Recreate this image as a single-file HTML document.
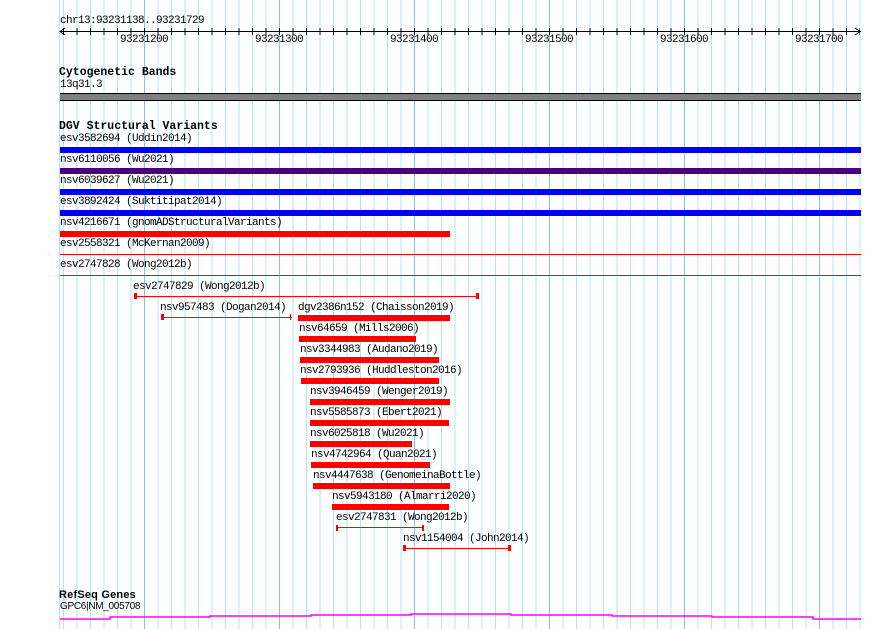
<!DOCTYPE html>
<html><head><meta charset="utf-8">
<style>
html,body{margin:0;padding:0;background:#fff;}
body{width:890px;height:629px;position:relative;overflow:hidden;font-family:"Liberation Mono",monospace;font-size:10px;color:#000;}
.grid{position:absolute;left:63px;top:0;width:798px;height:629px;
 background-image:repeating-linear-gradient(to right,#ade8f0 0 1px,transparent 1px 13.5px);
 background-position:0 0;}
.maj{position:absolute;top:0;width:1px;height:629px;background:#84c4e4;}
.t{position:absolute;white-space:pre;line-height:11px;font-size:11px;letter-spacing:-0.6px;}
.b{position:absolute;white-space:pre;line-height:12px;font-size:11.5px;font-weight:bold;}
.bar{position:absolute;height:6px;}
.red{background:#ff0000;}
.ln{position:absolute;height:1px;background:#ff0000;}
.cap{position:absolute;width:3px;height:6px;background:#ff0000;}
</style></head><body>
<div class="grid"></div>
<div style="position:absolute;left:59px;top:0;width:1px;height:629px;background:#ade8f0"></div>
<div class="maj" style="left:144px"></div>
<div class="maj" style="left:279px"></div>
<div class="maj" style="left:414px"></div>
<div class="maj" style="left:549px"></div>
<div class="maj" style="left:684px"></div>
<div class="maj" style="left:819px"></div>

<!-- ruler -->
<div class="t" style="left:60px;top:16px">chr13:93231138..93231729</div>
<div style="position:absolute;left:60px;top:31px;width:801px;height:1px;background:#000"></div>
<div style="position:absolute;left:63px;top:28px;width:797px;height:7px;background-image:repeating-linear-gradient(to right,#000 0 1px,transparent 1px 13.5px)"></div>
<svg style="position:absolute;left:59px;top:27px" width="8" height="9"><path d="M6 1 L1 4.5 L6 8" fill="none" stroke="#000" stroke-width="1"/></svg>
<svg style="position:absolute;left:854px;top:27px" width="8" height="9"><path d="M1 1 L6 4.5 L1 8" fill="none" stroke="#000" stroke-width="1"/></svg>
<div class="t" style="left:120px;top:35px">93231200</div>
<div class="t" style="left:255px;top:35px">93231300</div>
<div class="t" style="left:390px;top:35px">93231400</div>
<div class="t" style="left:525px;top:35px">93231500</div>
<div class="t" style="left:660px;top:35px">93231600</div>
<div class="t" style="left:795px;top:35px">93231700</div>

<!-- cytobands -->
<div class="b" style="left:59px;top:67px">Cytogenetic Bands</div>
<div class="t" style="left:60px;top:80px">13q31.3</div>
<div style="position:absolute;left:60px;top:93px;width:801px;height:6px;background:#808080;border-top:1px solid #000;border-bottom:1px solid #000"></div>

<!-- DGV -->
<div class="b" style="left:59px;top:121px">DGV Structural Variants</div>
<div class="t" style="left:60px;top:134px">esv3582694 (Uddin2014)</div>
<div class="bar" style="left:60px;top:147px;width:801px;background:#0000ff"></div>
<div class="t" style="left:60px;top:155px">nsv6110056 (Wu2021)</div>
<div class="bar" style="left:60px;top:168px;width:801px;background:#4b0082"></div>
<div class="t" style="left:60px;top:176px">nsv6039627 (Wu2021)</div>
<div class="bar" style="left:60px;top:189px;width:801px;background:#0000ff"></div>
<div class="t" style="left:60px;top:197px">esv3892424 (Suktitipat2014)</div>
<div class="bar" style="left:60px;top:210px;width:801px;background:#0000ff"></div>
<div class="t" style="left:60px;top:218px">nsv4216671 (gnomADStructuralVariants)</div>
<div class="bar red" style="left:60px;top:231px;width:390px"></div>
<div class="t" style="left:60px;top:239px">esv2558321 (McKernan2009)</div>
<div class="ln" style="left:60px;top:254px;width:801px"></div>
<div class="t" style="left:60px;top:260px">esv2747828 (Wong2012b)</div>
<div class="ln" style="left:60px;top:275px;width:801px"></div>

<div class="t" style="left:133px;top:282px">esv2747829 (Wong2012b)</div>
<div class="ln" style="left:135px;top:296px;width:343px"></div>
<div class="cap" style="left:134px;top:293px"></div><div class="cap" style="left:476px;top:293px"></div>

<div class="t" style="left:160px;top:303px">nsv957483 (Dogan2014)</div>
<div class="ln" style="left:161px;top:317px;width:131px"></div>
<div class="cap" style="left:161px;top:314px"></div><div class="cap" style="left:290px;top:314px;width:1px"></div>

<div class="t" style="left:298px;top:303px">dgv2386n152 (Chaisson2019)</div>
<div class="bar red" style="left:298px;top:315px;width:152px"></div>
<div class="t" style="left:299px;top:324px">nsv64659 (Mills2006)</div>
<div class="bar red" style="left:299px;top:336px;width:117px"></div>
<div class="t" style="left:300px;top:345px">nsv3344983 (Audano2019)</div>
<div class="bar red" style="left:300px;top:357px;width:139px"></div>
<div class="t" style="left:300px;top:366px">nsv2793936 (Huddleston2016)</div>
<div class="bar red" style="left:301px;top:378px;width:138px"></div>
<div class="t" style="left:310px;top:387px">nsv3946459 (Wenger2019)</div>
<div class="bar red" style="left:310px;top:399px;width:140px"></div>
<div class="t" style="left:310px;top:408px">nsv5585873 (Ebert2021)</div>
<div class="bar red" style="left:310px;top:420px;width:139px"></div>
<div class="t" style="left:310px;top:429px">nsv6025818 (Wu2021)</div>
<div class="bar red" style="left:310px;top:441px;width:102px"></div>
<div class="t" style="left:311px;top:450px">nsv4742964 (Quan2021)</div>
<div class="bar red" style="left:311px;top:462px;width:119px"></div>
<div class="t" style="left:313px;top:471px">nsv4447638 (GenomeinaBottle)</div>
<div class="bar red" style="left:313px;top:483px;width:137px"></div>
<div class="t" style="left:332px;top:492px">nsv5943180 (Almarri2020)</div>
<div class="bar red" style="left:332px;top:504px;width:117px"></div>
<div class="t" style="left:336px;top:513px">esv2747831 (Wong2012b)</div>
<div class="ln" style="left:336px;top:527px;width:88px"></div>
<div class="cap" style="left:336px;top:525px;width:2px"></div><div class="cap" style="left:422px;top:525px;width:2px"></div>
<div class="t" style="left:403px;top:534px">nsv1154004 (John2014)</div>
<div class="ln" style="left:403px;top:548px;width:107px"></div>
<div class="cap" style="left:403px;top:545px"></div><div class="cap" style="left:508px;top:545px"></div>

<!-- RefSeq -->
<div class="b" style="left:59px;top:589px;font-family:'Liberation Sans',sans-serif;font-size:11px;letter-spacing:0.2px">RefSeq Genes</div>
<div style="position:absolute;white-space:pre;line-height:10px;left:60px;top:602px;font-family:'Liberation Sans',sans-serif;font-size:10px;letter-spacing:-0.3px">GPC6|NM_005708</div>
<svg style="position:absolute;left:0;top:600px" width="890" height="29">
<path d="M60 19 H110 V17 H210 V16 H311 V15 H411 V14 H511 V15 H612 V16 H712 V17 H813 V19 H861" fill="none" stroke="#ff00ff" stroke-width="1.5"/>
</svg>
</body></html>
